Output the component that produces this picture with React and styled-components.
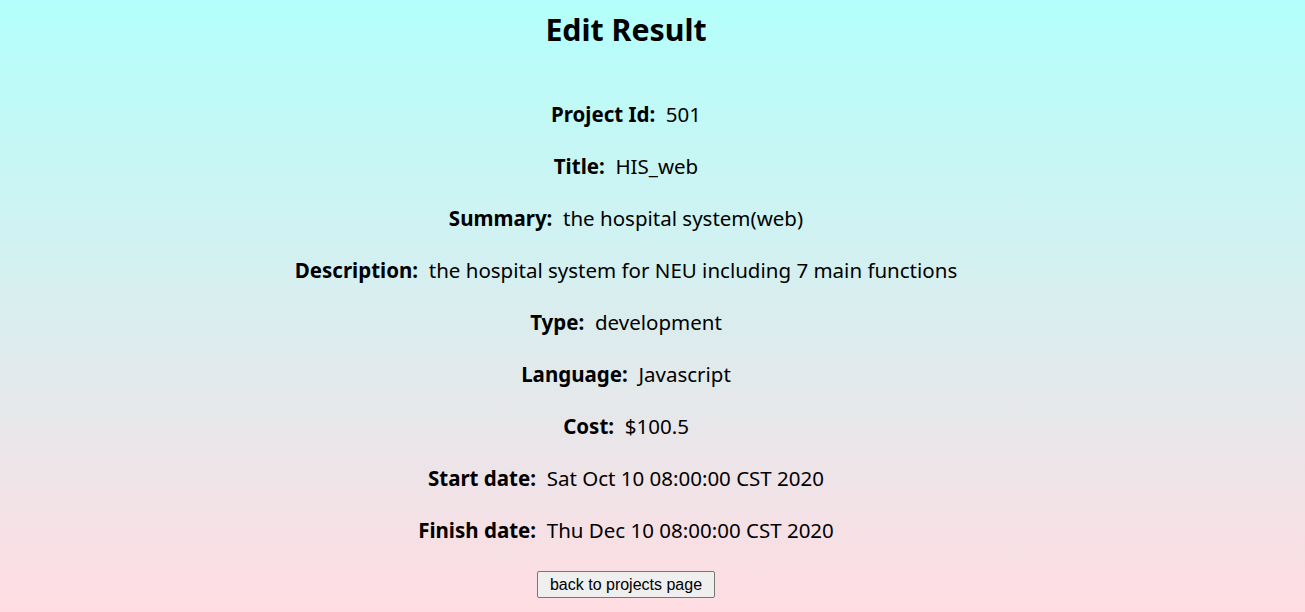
import React from 'react';
import styled, { createGlobalStyle } from 'styled-components';

const GlobalStyle = createGlobalStyle`
  html, body {
    margin: 0;
    padding: 0;
    height: 100%;
  }
  body {
    background: linear-gradient(to bottom, #b3fffb 0%, #ffdce2 100%);
    font-family: "Noto Sans", "Open Sans", sans-serif;
    color: #000;
  }
  #root {
    min-height: 100%;
  }
`;

const Page = styled.div`
  width: 1252px;
  display: flex;
  flex-direction: column;
  align-items: center;
  padding-top: 10px;
`;

const Heading = styled.h1`
  margin: 0;
  font-size: 30.3px;
  line-height: 40px;
  font-weight: 700;
`;

const Details = styled.div`
  display: flex;
  flex-direction: column;
  align-items: center;
  gap: 26px;
  margin-top: 51px;
`;

const Row = styled.div`
  font-size: 20.5px;
  line-height: 26px;
  white-space: pre;
`;

const Label = styled.b`
  font-weight: 700;
`;

const BackButton = styled.button`
  margin-top: 28px;
  font-family: "Liberation Sans", Arial, sans-serif;
  font-size: 16px;
  height: 27px;
  padding: 0 11.5px;
  background: #efefef;
  border: 1px solid #767676;
  border-radius: 2px;
  color: #000;
  cursor: pointer;
`;

const project = [
  ['Project Id', '501'],
  ['Title', 'HIS_web'],
  ['Summary', 'the hospital system(web)'],
  ['Description', 'the hospital system for NEU including 7 main functions'],
  ['Type', 'development'],
  ['Language', 'Javascript'],
  ['Cost', '$100.5'],
  ['Start date', 'Sat Oct 10 08:00:00 CST 2020'],
  ['Finish date', 'Thu Dec 10 08:00:00 CST 2020'],
];

export default function App() {
  return (
    <>
      <GlobalStyle />
      <Page>
        <Heading>Edit Result</Heading>
        <Details>
          {project.map(([label, value]) => (
            <Row key={label}>
              <Label>{label}:</Label>{'  '}{value}
            </Row>
          ))}
        </Details>
        <BackButton>back to projects page</BackButton>
      </Page>
    </>
  );
}
